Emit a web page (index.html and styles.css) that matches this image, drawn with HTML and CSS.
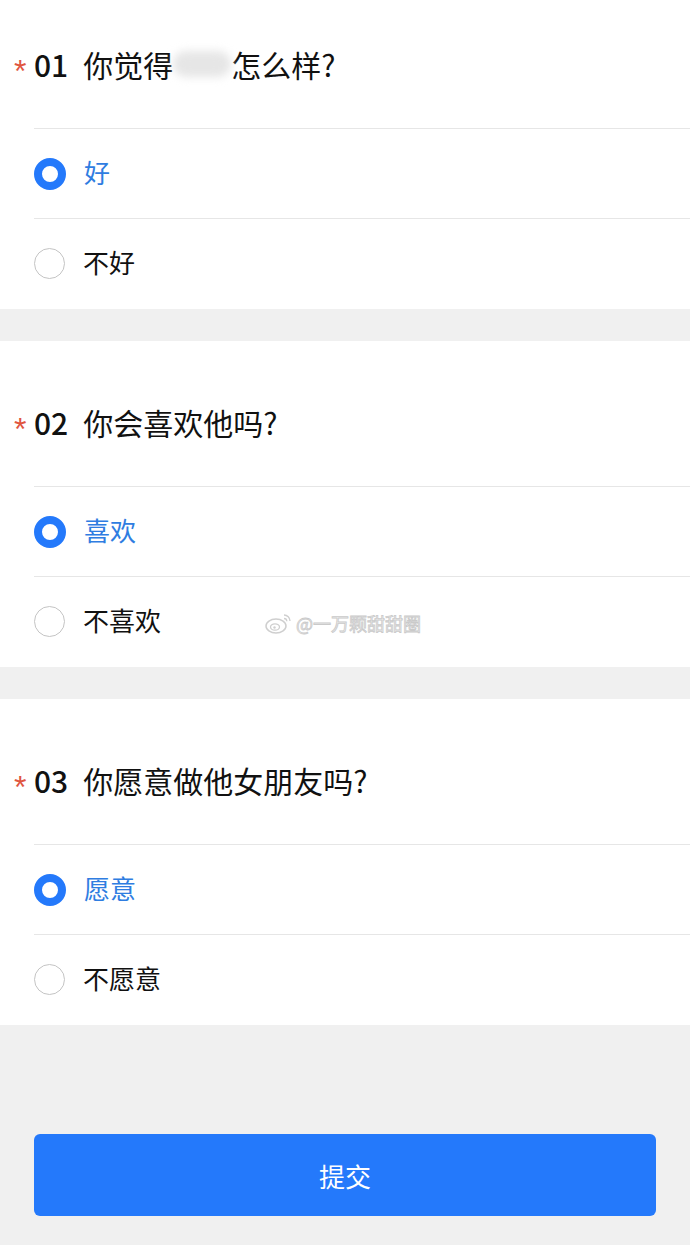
FILE: index.html
```html
<!DOCTYPE html>
<html lang="zh-CN">
<head>
  <meta charset="UTF-8">
  <title>问卷</title>
  <link rel="stylesheet" href="styles.css">
</head>
<body>
  <div class="page">
    <div class="card card-first">
      <div class="q-title">
        <span class="req">*</span>
        <span class="q-num">01</span>
        <span class="q-text">你觉得<span class="smudge"></span>怎么样?</span>
      </div>
      <div class="options">
        <div class="option checked"><span class="radio"></span><span class="label">好</span></div>
        <div class="option"><span class="radio"></span><span class="label">不好</span></div>
      </div>
    </div>

    <div class="card">
      <div class="q-title">
        <span class="req">*</span>
        <span class="q-num">02</span>
        <span class="q-text">你会喜欢他吗?</span>
      </div>
      <div class="options">
        <div class="option checked"><span class="radio"></span><span class="label">喜欢</span></div>
        <div class="option"><span class="radio"></span><span class="label">不喜欢</span>
          <span class="watermark">
            <svg width="28" height="22" viewBox="0 0 28 22">
              <ellipse cx="11" cy="14" rx="10" ry="7" fill="none" stroke="#cfcfcf" stroke-width="1.5"/>
              <ellipse cx="10" cy="15" rx="4.5" ry="3.2" fill="none" stroke="#cfcfcf" stroke-width="1.3"/>
              <circle cx="9.5" cy="15.5" r="1.2" fill="#cfcfcf"/>
              <path d="M19 3a6 6 0 0 1 6 6" fill="none" stroke="#cfcfcf" stroke-width="1.4"/>
              <path d="M19 6.5a2.8 2.8 0 0 1 2.8 2.8" fill="none" stroke="#cfcfcf" stroke-width="1.3"/>
            </svg>
            <span class="wm-text">@一万颗甜甜圈</span>
          </span>
        </div>
      </div>
    </div>

    <div class="card">
      <div class="q-title">
        <span class="req">*</span>
        <span class="q-num">03</span>
        <span class="q-text">你愿意做他女朋友吗?</span>
      </div>
      <div class="options">
        <div class="option checked"><span class="radio"></span><span class="label">愿意</span></div>
        <div class="option"><span class="radio"></span><span class="label">不愿意</span></div>
      </div>
    </div>

    <div class="footer">
      <button class="submit">提交</button>
    </div>
  </div>
</body>
</html>
```

FILE: styles.css
```css
body {
  margin: 0;
  background: #f0f0f0;
  font-family: "Noto Sans CJK SC", "Noto Sans", sans-serif;
  color: #111;
}
.page {
  display: flex;
  flex-direction: column;
  gap: 32px;
}
.card {
  background: #fff;
}
.q-title {
  display: flex;
  align-items: center;
  padding: 61px 0 44px 14px;
  height: 40px;
  font-size: 30px;
  line-height: 40px;
}
.card-first .q-title {
  padding-top: 44px;
}
.req {
  width: 20px;
  height: 40px;
  color: #e0553f;
  font-family: "Liberation Sans", sans-serif;
  font-size: 32px;
  line-height: 54px;
}
.q-num {
  font-weight: 500;
  margin-right: 15px;
}
.q-text {
  display: flex;
  align-items: center;
}
.smudge {
  display: inline-block;
  width: 58px;
  height: 26px;
  border-radius: 13px;
  background: #e6e6e6;
  filter: blur(4px);
}
.options {
  margin-left: 34px;
  padding-bottom: 1px;
}
.option {
  position: relative;
  display: flex;
  align-items: center;
  height: 89px;
  border-top: 1px solid #e6e6e6;
  font-size: 26px;
}
.label {
  margin-top: -4px;
}
.radio {
  width: 29px;
  height: 29px;
  border: 1.5px solid #c4c4c4;
  border-radius: 50%;
  margin-right: 18px;
}
.option.checked .radio {
  width: 16px;
  height: 16px;
  border: 8px solid #2479fb;
}
.option.checked .label {
  color: #2f7de1;
}
.watermark {
  position: absolute;
  left: 231px;
  top: 33px;
  display: flex;
  align-items: center;
  gap: 3px;
}
.wm-text {
  font-size: 18px;
  color: #f4f4f4;
  -webkit-text-stroke: 0.8px #cacaca;
}
.footer {
  padding: 77px 34px 29px;
}
.submit {
  display: block;
  width: 100%;
  height: 82px;
  border: none;
  border-radius: 6px;
  background: #2479fb;
  color: #fff;
  font-family: inherit;
  font-size: 26px;
}
```
